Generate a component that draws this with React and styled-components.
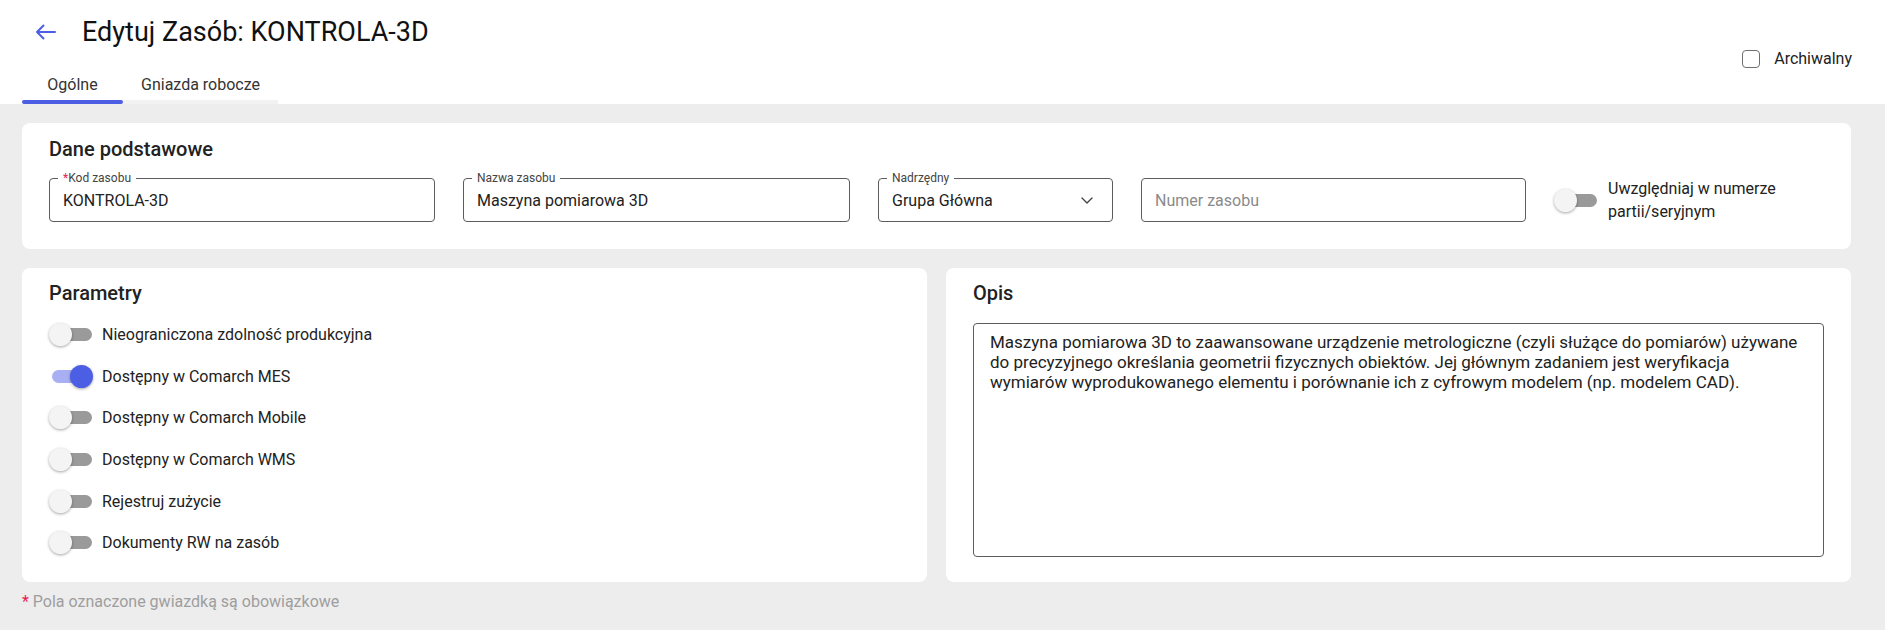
import React from 'react';
import styled, { createGlobalStyle } from 'styled-components';

const GlobalStyle = createGlobalStyle`
  html, body { margin: 0; padding: 0; }
  body {
    font-family: Roboto, "Noto Sans", Arial, sans-serif;
    background: #ededed;
    color: #222;
  }
  * { box-sizing: border-box; }
`;

const BLUE = '#4b5ee4';

const Page = styled.div`
  min-height: 630px;
  display: flex;
  flex-direction: column;
  background: #ededed;
`;

const Header = styled.header`
  background: #fff;
  height: 104px;
  display: flex;
  justify-content: space-between;
  padding: 0 33px 0 22px;
`;

const HeaderLeft = styled.div`
  display: flex;
  flex-direction: column;
`;

const TitleRow = styled.div`
  height: 64px;
  display: flex;
  align-items: center;
  gap: 26px;
  padding-left: 13px;
`;

const BackButton = styled.button`
  border: none;
  background: transparent;
  padding: 0;
  display: flex;
  align-items: center;
  cursor: pointer;
  color: ${BLUE};
`;

const Title = styled.h1`
  margin: 0;
  font-size: 27px;
  line-height: 32px;
  font-weight: 400;
  color: #111;
`;

const Tabs = styled.div`
  display: flex;
  height: 40px;
`;

const Tab = styled.div`
  min-width: 101px;
  display: flex;
  flex-direction: column;
  cursor: pointer;
`;

const TabLabel = styled.span`
  flex: 1;
  padding: 11px 18px 5px;
  text-align: center;
  font-size: 16px;
  line-height: 20px;
  color: #333;
`;

const TabBar = styled.span`
  height: 4px;
  background: ${p => (p.$active ? BLUE : '#f2f2f2')};
  border-radius: ${p => (p.$active ? '2px' : '0')};
`;

const HeaderRight = styled.label`
  padding-top: 49px;
  display: flex;
  align-items: flex-start;
  gap: 14px;
  font-size: 16px;
  line-height: 20px;
  color: #222;
  cursor: pointer;
`;

const CheckBox = styled.span`
  margin-top: 1px;
  width: 18px;
  height: 18px;
  border: 1.5px solid #6f6f6f;
  border-radius: 4px;
  background: #fff;
`;

const Main = styled.main`
  padding: 19px 34px 0 22px;
  display: flex;
  flex-direction: column;
`;

const Cards = styled.div`
  display: flex;
  flex-direction: column;
  gap: 19px;
`;

const Card = styled.section`
  background: #fff;
  border-radius: 8px;
  padding: ${p => p.$pad};
  display: flex;
  flex-direction: column;
`;

const CardTitle = styled.h2`
  margin: 0 0 ${p => p.$mb}px;
  font-size: 20px;
  line-height: 24px;
  font-weight: 500;
  color: #222;
`;

const FieldsRow = styled.div`
  display: flex;
  align-items: center;
  gap: 28px;
`;

const Field = styled.div`
  position: relative;
  width: ${p => p.$w}px;
  height: 44px;
  border: 1px solid #5c5c5c;
  border-radius: 4px;
  display: flex;
  align-items: center;
  justify-content: space-between;
  padding: 0 19px 0 13px;
  flex-shrink: 0;
`;

const FieldLabel = styled.span`
  position: absolute;
  top: -8px;
  left: 8px;
  padding: 0 5px;
  background: #fff;
  font-size: 12px;
  line-height: 14px;
  color: #444;
`;

const Req = styled.span`
  color: #e5224f;
`;

const Input = styled.input`
  border: none;
  outline: none;
  background: transparent;
  padding: 0;
  width: 100%;
  font-family: Roboto, "Noto Sans", Arial, sans-serif;
  font-size: 16px;
  color: #222;
  &::placeholder { color: #8a8a8a; }
`;

const SelectValue = styled.span`
  font-size: 16px;
  color: #222;
`;

const SwitchLine = styled.label`
  display: flex;
  align-items: center;
  gap: ${p => p.$gap}px;
  min-height: ${p => p.$h}px;
  cursor: pointer;
`;

const SwitchText = styled.span`
  font-size: 16px;
  line-height: 23px;
  color: #222;
  max-width: ${p => (p.$max ? `${p.$max}px` : 'none')};
`;

const SwitchRoot = styled.span`
  position: relative;
  width: 44px;
  height: 23px;
  flex-shrink: 0;
  display: inline-block;
`;

const SwitchTrack = styled.span`
  position: absolute;
  left: 3px;
  right: 1px;
  top: 5px;
  height: 13px;
  border-radius: 7px;
  background: ${p => (p.$on ? '#a8b0f3' : '#9a9a9a')};
`;

const SwitchThumb = styled.span`
  position: absolute;
  top: 0;
  left: ${p => (p.$on ? '21px' : '0')};
  width: 23px;
  height: 23px;
  border-radius: 50%;
  background: ${p => (p.$on ? BLUE : '#f4f4f4')};
  box-shadow: 0 1px 3px rgba(0, 0, 0, 0.35);
`;

const LowerRow = styled.div`
  display: flex;
  gap: 19px;
`;

const HalfCard = styled(Card)`
  flex: 1;
`;

const ToggleList = styled.div`
  display: flex;
  flex-direction: column;
`;

const TextArea = styled.textarea`
  height: 234px;
  width: 100%;
  border: 1px solid #5c5c5c;
  border-radius: 4px;
  padding: 8px 19px 8px 16px;
  resize: none;
  outline: none;
  font-family: Roboto, "Noto Sans", Arial, sans-serif;
  font-size: 17px;
  line-height: 20px;
  color: #222;
`;

const Footer = styled.p`
  margin: 0;
  padding-top: 10px;
  font-size: 16px;
  line-height: 20px;
  color: #9e9e9e;
`;

function Switch({ on }) {
  return (
    <SwitchRoot>
      <SwitchTrack $on={on} />
      <SwitchThumb $on={on} />
    </SwitchRoot>
  );
}

const params = [
  { label: 'Nieograniczona zdolność produkcyjna', on: false },
  { label: 'Dostępny w Comarch MES', on: true },
  { label: 'Dostępny w Comarch Mobile', on: false },
  { label: 'Dostępny w Comarch WMS', on: false },
  { label: 'Rejestruj zużycie', on: false },
  { label: 'Dokumenty RW na zasób', on: false },
];

const description =
  'Maszyna pomiarowa 3D to zaawansowane urządzenie metrologiczne (czyli służące do pomiarów) używane do precyzyjnego określania geometrii fizycznych obiektów. Jej głównym zadaniem jest weryfikacja wymiarów wyprodukowanego elementu i porównanie ich z cyfrowym modelem (np. modelem CAD).';

export default function App() {
  return (
    <Page>
      <GlobalStyle />
      <Header>
        <HeaderLeft>
          <TitleRow>
            <BackButton aria-label="Wstecz">
              <svg width="21" height="16" viewBox="0 0 21 16" fill="none">
                <path
                  d="M20 8H2M8.5 1.5L2 8l6.5 6.5"
                  stroke="currentColor"
                  strokeWidth="2"
                  strokeLinecap="round"
                  strokeLinejoin="round"
                />
              </svg>
            </BackButton>
            <Title>Edytuj Zasób: KONTROLA-3D</Title>
          </TitleRow>
          <Tabs>
            <Tab>
              <TabLabel>Ogólne</TabLabel>
              <TabBar $active />
            </Tab>
            <Tab>
              <TabLabel>Gniazda robocze</TabLabel>
              <TabBar />
            </Tab>
          </Tabs>
        </HeaderLeft>
        <HeaderRight>
          <CheckBox />
          Archiwalny
        </HeaderRight>
      </Header>

      <Main>
        <Cards>
          <Card $pad="14px 27px 26px">
            <CardTitle $mb={16}>Dane podstawowe</CardTitle>
            <FieldsRow>
              <Field $w={386}>
                <FieldLabel>
                  <Req>*</Req>Kod zasobu
                </FieldLabel>
                <Input defaultValue="KONTROLA-3D" />
              </Field>
              <Field $w={387}>
                <FieldLabel>Nazwa zasobu</FieldLabel>
                <Input defaultValue="Maszyna pomiarowa 3D" />
              </Field>
              <Field $w={235}>
                <FieldLabel>Nadrzędny</FieldLabel>
                <SelectValue>Grupa Główna</SelectValue>
                <svg width="12" height="7" viewBox="0 0 12 7" fill="none">
                  <path d="M1 1l5 5 5-5" stroke="#444" strokeWidth="1.4" strokeLinecap="round" strokeLinejoin="round" />
                </svg>
              </Field>
              <Field $w={385}>
                <Input placeholder="Numer zasobu" />
              </Field>
              <SwitchLine $gap={10} $h={46}>
                <Switch on={false} />
                <SwitchText $max={216}>Uwzględniaj w numerze partii/seryjnym</SwitchText>
              </SwitchLine>
            </FieldsRow>
          </Card>

          <LowerRow>
            <HalfCard $pad="13px 27px 16px">
              <CardTitle $mb={9}>Parametry</CardTitle>
              <ToggleList>
                {params.map(p => (
                  <SwitchLine key={p.label} $gap={9} $h={41.6}>
                    <Switch on={p.on} />
                    <SwitchText>{p.label}</SwitchText>
                  </SwitchLine>
                ))}
              </ToggleList>
            </HalfCard>
            <HalfCard $pad="13px 27px 25px">
              <CardTitle $mb={18}>Opis</CardTitle>
              <TextArea defaultValue={description} />
            </HalfCard>
          </LowerRow>
        </Cards>

        <Footer>
          <Req>*</Req> Pola oznaczone gwiazdką są obowiązkowe
        </Footer>
      </Main>
    </Page>
  );
}
